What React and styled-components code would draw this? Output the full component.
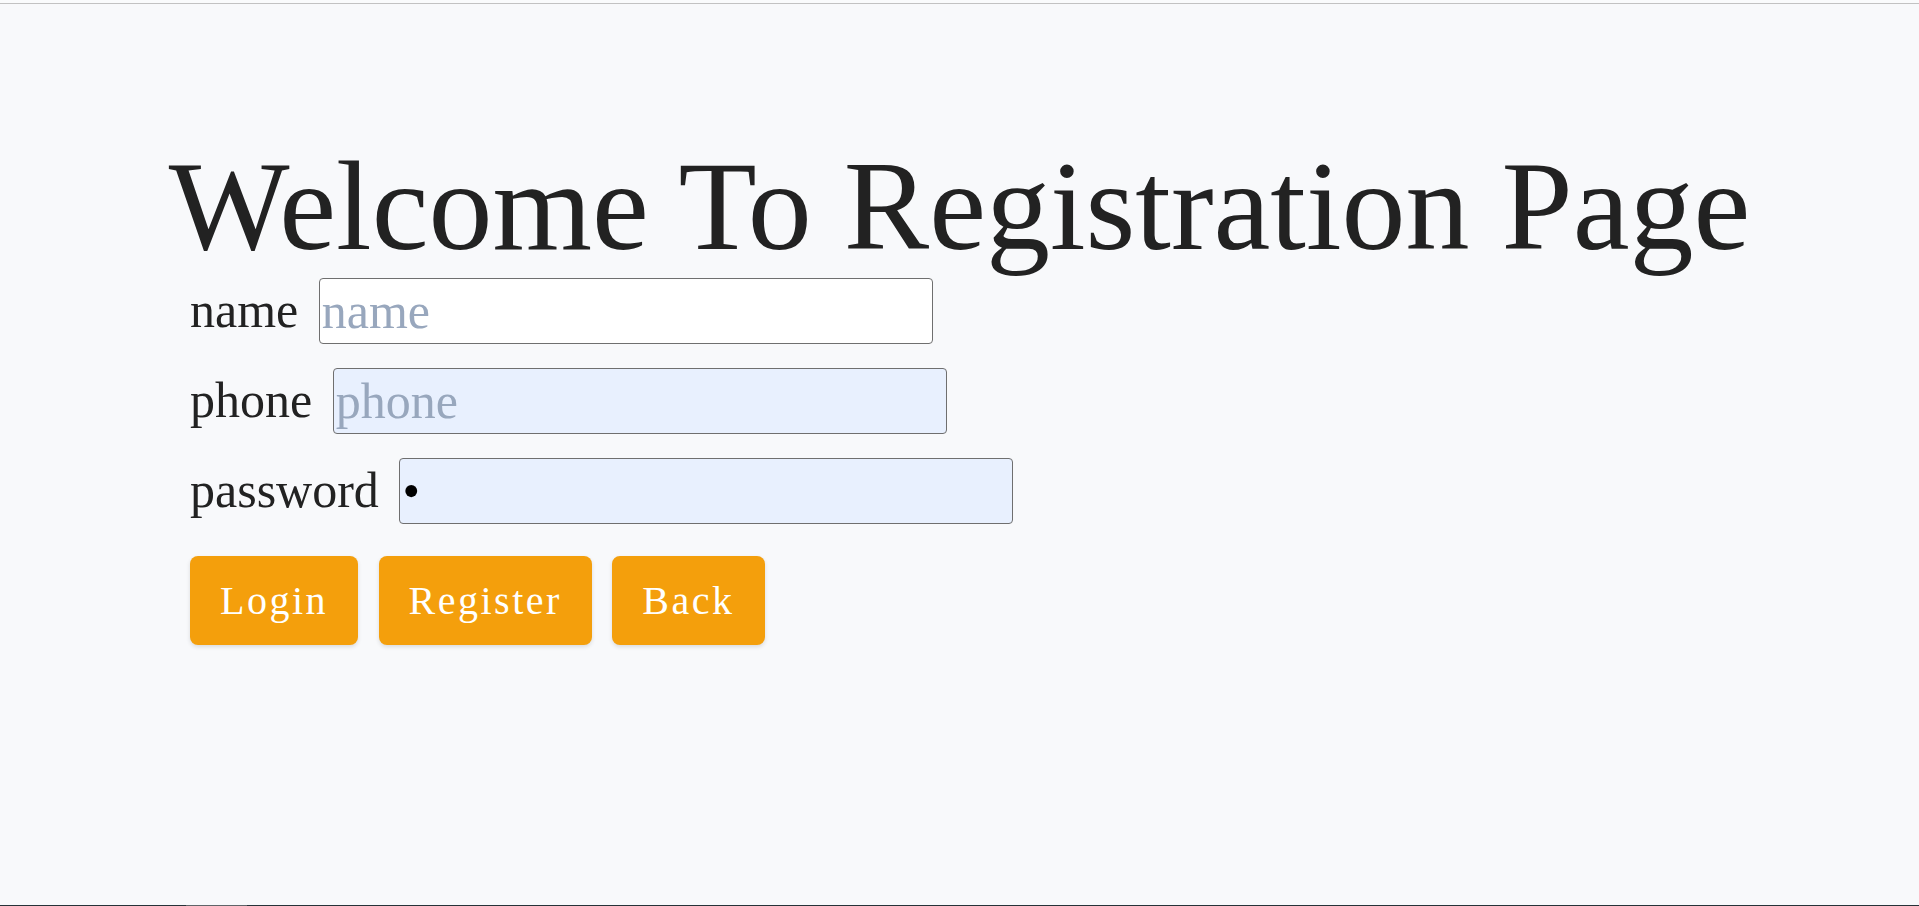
import React from 'react';
import styled, { createGlobalStyle } from 'styled-components';

const GlobalStyle = createGlobalStyle`
    * {
        box-sizing: border-box;
    }
    body {
        margin: 0;
        background-color: #f8f9fb;
        font-family: 'Liberation Serif', 'Times New Roman', serif;
        color: #222;
    }
`;

const fields = [
    { label: 'name', type: 'text', placeholder: 'name' },
    { label: 'phone', type: 'text', placeholder: 'phone', filled: true },
    { label: 'password', type: 'password', value: 'a', filled: true },
];

const buttons = ['Login', 'Register', 'Back'];

const App = () => {
    return (
        <>
            <GlobalStyle />
            <Page>
                <TopRule />
                <Main>
                    <Title>Welcome To Registration Page</Title>
                    <Form>
                        {fields.map((f) => (
                            <Row key={f.label}>
                                <Label>{f.label}</Label>
                                <Input
                                    type={f.type}
                                    placeholder={f.placeholder}
                                    defaultValue={f.value}
                                    $filled={f.filled}
                                />
                            </Row>
                        ))}
                        <ButtonRow>
                            {buttons.map((b) => (
                                <ActionButton key={b} type='button'>
                                    {b}
                                </ActionButton>
                            ))}
                        </ButtonRow>
                    </Form>
                </Main>
                <BottomBar>
                    <BarSegment />
                </BottomBar>
            </Page>
        </>
    );
};

const Page = styled.div`
    display: flex;
    flex-direction: column;
    width: 100%;
    height: 100vh;
    overflow: hidden;
`;

const TopRule = styled.div`
    height: 4px;
    background-color: #fafbfc;
    border-bottom: 1px solid #c2c2c2;
`;

const Main = styled.main`
    flex: 1;
    display: flex;
    flex-direction: column;
    padding-top: 130px;
`;

const Title = styled.h1`
    margin: 0;
    font-size: 128px;
    font-weight: normal;
    line-height: 144px;
    text-align: center;
    color: #222;
`;

const Form = styled.form`
    display: flex;
    flex-direction: column;
    gap: 24px;
    padding-left: 190px;
`;

const Row = styled.div`
    display: flex;
    align-items: center;
    gap: 20.5px;
`;

const Label = styled.label`
    font-size: 50px;
    line-height: 1.15;
    color: #222;
`;

const Input = styled.input`
    width: 614px;
    height: 66px;
    padding: 1px 2px;
    border: 1px solid #6f6f6f;
    border-radius: 4px;
    background-color: ${(p) => (p.$filled ? '#e8f0fe' : '#fff')};
    font-family: 'Liberation Serif', 'Times New Roman', serif;
    font-size: 50px;
    color: #000;
    outline: none;
    &::placeholder {
        color: #98a7bd;
    }
`;

const ButtonRow = styled.div`
    display: flex;
    gap: 20.5px;
    margin-top: 8px;
`;

const ActionButton = styled.button`
    height: 89px;
    padding: 0 30px;
    border: none;
    border-radius: 8px;
    background-color: #f49f0c;
    color: #fff;
    font-family: 'Liberation Serif', 'Times New Roman', serif;
    font-size: 40px;
    letter-spacing: 2.5px;
    line-height: 1.15;
    box-shadow: 0 2px 4px rgba(0, 0, 0, 0.12);
    cursor: pointer;
`;

const BottomBar = styled.div`
    display: flex;
    height: 1px;
    background-color: #263238;
`;

const BarSegment = styled.div`
    width: 61px;
    margin-left: 186px;
    background-color: #5f6468;
`;

export default App;
